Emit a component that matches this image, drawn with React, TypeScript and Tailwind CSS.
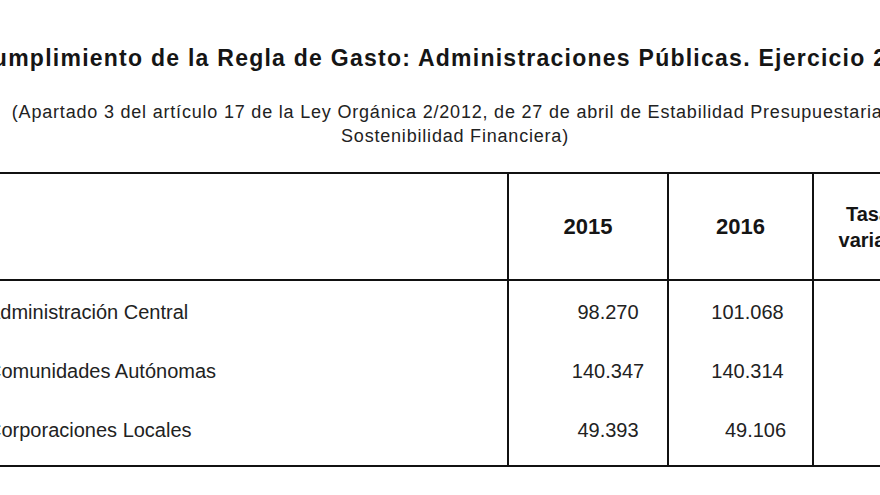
const rows = [
  { label: "Administración Central", a: "98.270", b: "101.068", bShift: "pl-[14px]" },
  { label: "Comunidades Autónomas", a: "140.347", b: "140.314", bShift: "pl-[14px]" },
  { label: "Corporaciones Locales", a: "49.393", b: "49.106", bShift: "pl-[30px]" },
];

export default function App() {
  return (
    <div className="w-[880px] h-[495px] overflow-hidden bg-white font-['Liberation_Sans',Arial,sans-serif] text-[#151515]">
      <div className="w-[960px] -ml-[25px]">
        <h1 className="pt-[45px] pr-[10px] text-center text-[23px] leading-[26px] tracking-[1.25px] font-bold whitespace-nowrap">
          Cumplimiento de la Regla de Gasto: Administraciones Públicas. Ejercicio 2016
        </h1>
        <p className="mt-[29px] text-center text-[18px] leading-[24px] tracking-[0.8px] text-[#222] whitespace-nowrap">
          (Apartado 3 del artículo 17 de la Ley Orgánica 2/2012, de 27 de abril de Estabilidad Presupuestaria y
          <br />
          Sostenibilidad Financiera)
        </p>

        <div className="mt-[24px] border-y-2 border-[#111]">
          {/* header */}
          <div className="grid grid-cols-[532px_160px_145px_123px] h-[107px] border-b-2 border-[#111]">
            <div />
            <div className="border-l-2 border-[#111] flex items-center justify-center text-[22px] font-bold">2015</div>
            <div className="border-l-2 border-[#111] flex items-center justify-center text-[22px] font-bold">2016</div>
            <div className="border-l-2 border-[#111] flex flex-col items-center justify-center pl-[16px] text-[20px] leading-[26px] font-bold text-center">
              <span>Tasa de</span>
              <span>variación</span>
            </div>
          </div>

          {/* body */}
          <div className="grid grid-cols-[532px_160px_145px_123px] text-[20px] text-[#222]">
            <div className="pt-px pb-[6px] pl-3">
              {rows.map((r) => (
                <div key={r.label} className="h-[59px] flex items-center">{r.label}</div>
              ))}
            </div>
            <div className="border-l-2 border-[#111] pt-px pb-[6px]">
              {rows.map((r) => (
                <div key={r.a} className="h-[59px] flex items-center justify-center pl-[40px]">{r.a}</div>
              ))}
            </div>
            <div className="border-l-2 border-[#111] pt-px pb-[6px]">
              {rows.map((r) => (
                <div key={r.b} className={`h-[59px] flex items-center justify-center ${r.bShift}`}>{r.b}</div>
              ))}
            </div>
            <div className="border-l-2 border-[#111]" />
          </div>
        </div>
      </div>
    </div>
  );
}
